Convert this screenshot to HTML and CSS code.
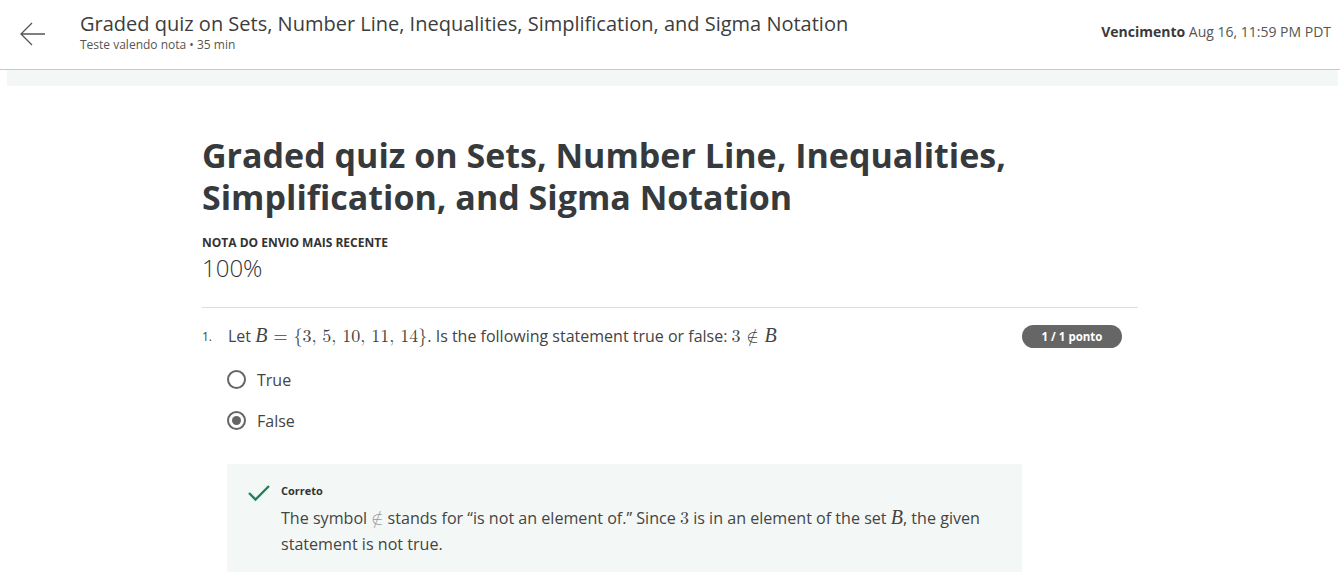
FILE: index.html
```html
<!DOCTYPE html>
<html>
<head>
<meta charset="utf-8">
<link rel="stylesheet" href="styles.css">
</head>
<body>
<header class="topbar">
  <div class="back">
    <svg width="28" height="28" viewBox="0 0 28 28"><path d="M26 14H2M13 3L2 14l11 11" fill="none" stroke="#555" stroke-width="1.3"/></svg>
  </div>
  <div class="titles">
    <div class="htitle">Graded quiz on Sets, Number Line, Inequalities, Simplification, and Sigma Notation</div>
    <div class="hsub">Teste valendo nota • 35 min</div>
  </div>
  <div class="due"><b>Vencimento</b> Aug 16, 11:59 PM PDT</div>
</header>
<div class="band"></div>
<main class="content">
  <h1 class="title">Graded quiz on Sets, Number Line, Inequalities, Simplification, and Sigma Notation</h1>
  <div class="gradelabel">NOTA DO ENVIO MAIS RECENTE</div>
  <div class="grade">100%</div>
  <hr class="divider">
  <div class="question">
    <div class="qhead">
      <span class="qnum">1.</span>
      <span class="qtext">Let <span class="m"><i>B</i> = {3, 5, 10, 11, 14}</span>. Is the following statement true or false: <span class="m">3 ∉ <i>B</i></span></span>
      <span class="badge">1 / 1 ponto</span>
    </div>
    <div class="options">
      <div class="opt"><span class="radio"></span><span>True</span></div>
      <div class="opt"><span class="radio on"></span><span>False</span></div>
    </div>
    <div class="feedback">
      <svg class="check" width="24" height="18" viewBox="0 0 24 18"><path d="M2 9l6.5 6.5L22 2" fill="none" stroke="#1f8354" stroke-width="2.4"/></svg>
      <div class="fbody">
        <div class="fstatus">Correto</div>
        <div class="ftext">The symbol <span class="m lite">∉</span> stands for “is not an element of.” Since <span class="m">3</span> is in an element of the set <span class="m"><i>B</i></span>, the given statement is not true.</div>
      </div>
    </div>
  </div>
</main>
</body>
</html>
```
FILE: styles.css
```css
* { box-sizing: border-box; }
body {
  margin: 0;
  font-family: "Open Sans", "Liberation Sans", sans-serif;
  color: #373a3c;
  background: #fff;
  overflow: hidden;
}
.topbar {
  height: 70px;
  border-bottom: 1px solid #c8c8c8;
  display: flex;
  align-items: flex-start;
  padding: 0 9px 0 19px;
}
.back { padding-top: 20px; width: 61px; }
.back svg { display: block; }
.titles { flex: 1; padding-top: 10px; }
.htitle { font-size: 20px; line-height: 27px; color: #3d3d3d; }
.hsub { font-size: 12px; line-height: 16px; color: #555; }
.due { padding-top: 22px; font-size: 14px; color: #555; }
.due b { color: #3a3a3a; font-weight: 700; }
.band {
  height: 16px;
  margin-left: 7px;
  margin-right: 2px;
  background: #f3f8f6;
}
.content {
  width: 936px;
  margin-left: 202px;
  padding-top: 48px;
}
.title {
  margin: 0;
  font-size: 34px;
  line-height: 42px;
  font-weight: 700;
  color: #373a3c;
  width: 840px;
}
.gradelabel {
  margin-top: 17px;
  font-size: 12px;
  font-weight: 700;
  color: #333;
  line-height: 16px;
}
.grade {
  font-size: 24px;
  font-weight: 300;
  line-height: 32px;
  color: #333;
  margin-top: 1px;
}
.divider {
  border: 0;
  border-top: 1px solid #ddd;
  margin: 23px 0 0 0;
}
.question { padding-top: 16px; }
.qhead {
  display: flex;
  align-items: center;
  height: 24px;
  padding-right: 16px;
}
.qnum { font-size: 12px; width: 26px; color: #444; }
.qtext { flex: 1; font-size: 16px; color: #444; }
.m { font-family: "Latin Modern Math", "DejaVu Serif", "Liberation Serif", serif; font-size: 18px; line-height: 1; }
.m i { font-style: italic; font-family: "Liberation Serif", serif; font-size: 20px; line-height: 1; }
.m.lite { color: #999; }
.badge {
  background: #666;
  color: #fff;
  font-size: 11.5px;
  font-weight: 700;
  border-radius: 12px;
  width: 100px;
  height: 23px;
  line-height: 23px;
  text-align: center;
}
.options { padding-left: 25px; padding-top: 11px; }
.opt {
  display: flex;
  align-items: center;
  gap: 11px;
  height: 41px;
  font-size: 16px;
  color: #444;
}
.radio {
  width: 19px;
  height: 19px;
  border: 2px solid #666;
  border-radius: 50%;
  display: flex;
  align-items: center;
  justify-content: center;
}
.radio.on::after {
  content: "";
  width: 9px;
  height: 9px;
  border-radius: 50%;
  background: #666;
}
.feedback {
  margin-left: 25px;
  margin-top: 23px;
  width: 795px;
  height: 108px;
  background: #f3f8f6;
  display: flex;
  padding: 19px 20px 0 20px;
  gap: 10px;
}
.check { margin-top: 1px; flex: none; }
.fstatus { font-size: 11px; font-weight: 700; color: #333; line-height: 16px; }
.ftext { font-size: 16.1px; line-height: 26px; color: #444; margin-top: 6px; }
```
